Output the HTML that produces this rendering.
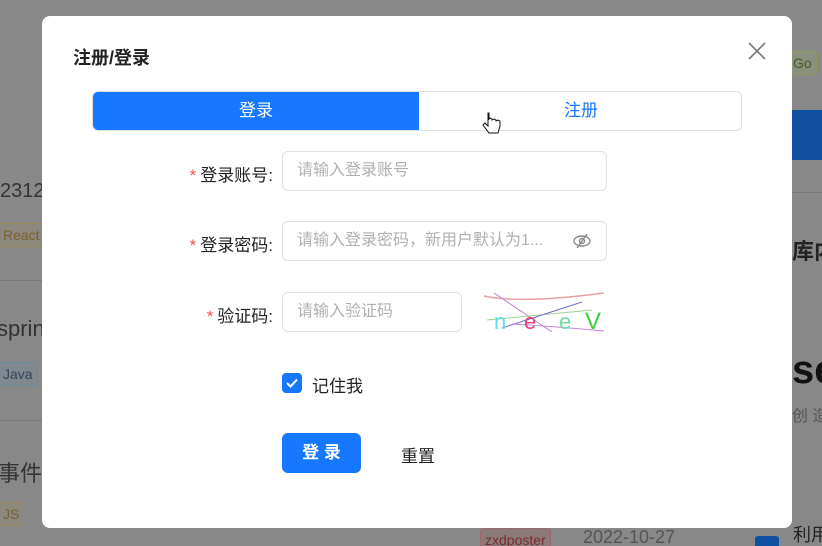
<!DOCTYPE html>
<html><head><meta charset="utf-8"><style>
*{margin:0;padding:0;box-sizing:border-box}
html,body{width:822px;height:546px;overflow:hidden}
body{background:#888;font-family:"Liberation Sans","Noto Sans CJK SC",sans-serif;position:relative}
.a{position:absolute;white-space:nowrap}
.tag{position:absolute;border:1px solid;border-radius:3px;font-size:14px;padding:0 4px;line-height:22px;white-space:nowrap}
.m{position:absolute;left:42px;top:16px;width:750px;height:512px;background:#fff;border-radius:8px}
.lbl{position:absolute;font-size:16px;color:#222;text-align:right;width:120px;white-space:nowrap}
.lbl b{color:#e55;font-weight:normal;margin-right:4px}
.in{position:absolute;border:1px solid #dcdfe6;border-radius:6px;height:40px;font-size:16px;color:#b0b0b0;padding-left:14px;line-height:38px;white-space:nowrap;overflow:hidden}
</style></head><body>
<div class="a" style="left:0;top:180px;font-size:20px;color:#333">2312</div>
<div class="tag" style="left:-2px;top:223px;color:#7a6030;border-color:#a08a5a;background:#8c887e">React</div>
<div class="a" style="left:0;top:280px;width:42px;height:1px;background:#777"></div>
<div class="a" style="left:-3px;top:316px;font-size:22px;color:#333">spring</div>
<div class="tag" style="left:-2px;top:362px;color:#345;border-color:#6a8a9a;background:#80898f">Java</div>
<div class="a" style="left:0;top:420px;width:42px;height:1px;background:#777"></div>
<div class="a" style="left:-2px;top:456px;font-size:22px;color:#333">事件</div>
<div class="tag" style="left:-2px;top:502px;color:#7a6030;border-color:#a08a5a;background:#8c887e">JS</div>
<div class="tag" style="left:788px;top:51px;color:#4a5a20;border-color:#8a9a5a;background:#8a9080">Go</div>
<div class="a" style="left:792px;top:110px;width:30px;height:50px;background:#1050a0"></div>
<div class="a" style="left:792px;top:192px;width:30px;height:1px;background:#777"></div>
<div class="a" style="left:792px;top:234px;font-size:22px;color:#222;font-weight:bold">库内</div>
<div class="a" style="left:792px;top:348px;font-size:40px;color:#111;font-weight:bold">se</div>
<div class="a" style="left:792px;top:402px;font-size:16px;color:#555">创 造</div>
<div class="tag" style="left:480px;top:528px;color:#7a2a2a;border-color:#9a6a6a;background:#8c7a7a">zxdposter</div>
<div class="a" style="left:583px;top:527px;font-size:18px;color:#555">2022-10-27</div>
<div class="a" style="left:755px;top:536px;width:24px;height:20px;background:#1050a0;border-radius:3px"></div>
<div class="a" style="left:793px;top:521px;font-size:18px;color:#222">利用</div>

<div class="m">
<div class="a" style="left:31px;top:28px;font-size:18px;font-weight:bold;color:#222">注册/登录</div>
<svg class="a" style="left:706px;top:26px" width="18" height="18"><path d="M1 1L17 17M17 1L1 17" stroke="#777" stroke-width="1.6"/></svg>
<div class="a" style="left:50px;top:75px;width:650px;height:40px;border:1px solid #dcdfe6;border-radius:6px;overflow:hidden">
<div class="a" style="left:0;top:0;width:326px;height:40px;background:#1677ff;color:#fff;font-size:17px;text-align:center;line-height:38px">登录</div>
<div class="a" style="left:326px;top:0;width:324px;height:40px;color:#1677ff;font-size:17px;text-align:center;line-height:38px">注册</div>
</div>
<svg class="a" style="left:440px;top:95px" width="20" height="26"><path d="M6 2v13l-3-3-2 2 6 8h9l2-7v-5l-2-1-2 1v-1l-2-1-2 1v-1l-2-1-1 1V2z" fill="#fff" stroke="#111" stroke-width="1"/></svg>
<div class="lbl" style="left:111px;top:145px;font-size:17px"><b>*</b>登录账号:</div>
<div class="in" style="left:240px;top:135px;width:325px">请输入登录账号</div>
<div class="lbl" style="left:111px;top:215px;font-size:17px"><b>*</b>登录密码:</div>
<div class="in" style="left:240px;top:205px;width:325px">请输入登录密码，新用户默认为1...</div>
<svg class="a" style="left:531px;top:217px" width="18" height="16"><ellipse cx="9" cy="8" rx="8" ry="5" fill="none" stroke="#888" stroke-width="1.4"/><circle cx="9" cy="8" r="2.5" fill="none" stroke="#888" stroke-width="1.4"/><path d="M14 1L4 15" stroke="#888" stroke-width="1.4"/></svg>
<div class="lbl" style="left:111px;top:286px;font-size:17px"><b>*</b>验证码:</div>
<div class="in" style="left:240px;top:276px;width:180px">请输入验证码</div>
<svg class="a" style="left:440px;top:276px" width="125" height="40">
<path d="M2 4Q40 12 122 1" stroke="#e8a0a0" fill="none" stroke-width="1.5"/>
<path d="M12 1L70 40" stroke="#c080d0" fill="none"/>
<path d="M5 28L110 18" stroke="#a0d090" fill="none"/>
<path d="M20 36L100 10" stroke="#7070d0" fill="none"/>
<path d="M30 32Q80 35 122 39" stroke="#c080e0" fill="none"/>
<text x="12" y="37" font-size="22" fill="#60e0e0" font-family="Liberation Sans">n</text>
<text x="42" y="37" font-size="22" fill="#e04080" font-family="Liberation Sans">e</text>
<text x="77" y="37" font-size="22" fill="#70e0a0" font-family="Liberation Sans">e</text>
<text x="103" y="37" font-size="24" fill="#40d040" font-family="Liberation Sans">V</text>
</svg>
<div class="a" style="left:240px;top:357px;width:20px;height:20px;background:#1677ff;border-radius:4px"><svg width="20" height="20"><path d="M5 10l3.5 3.5L15 6.5" stroke="#fff" stroke-width="2" fill="none"/></svg></div>
<div class="a" style="left:270px;top:356px;font-size:17px;color:#222">记住我</div>
<div class="a" style="left:240px;top:417px;width:79px;height:40px;background:#1677ff;border-radius:6px;color:#fff;font-size:17px;text-align:center;line-height:40px;font-weight:bold">登 录</div>
<div class="a" style="left:359px;top:426px;font-size:17px;color:#222">重置</div>
</div>
</body></html>
